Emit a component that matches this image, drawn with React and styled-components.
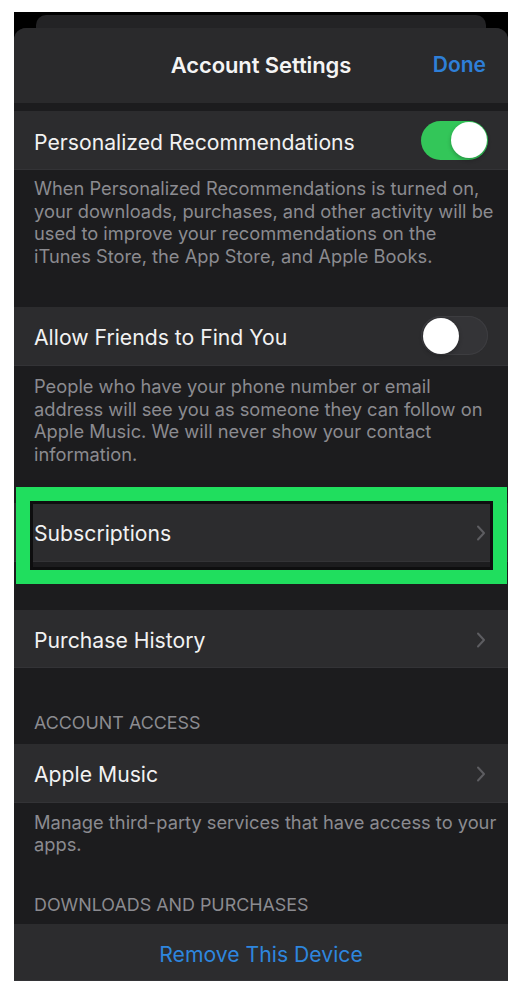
import styled, { createGlobalStyle, css } from "styled-components"

const Global = createGlobalStyle`
    html, body{
        margin: 0;
        padding: 0;
        background: #ffffff;
    }
    *{
        box-sizing: border-box;
    }
`

const Page = styled.div`
    padding: 12px 14px 0;
    font-family: Inter, "Liberation Sans", sans-serif;
`

const Screen = styled.div`
    width: 494px;
    height: 969px;
    background: #000;
    overflow: hidden;
    display: flex;
    flex-direction: column;
`

const BackCard = styled.div`
    margin: 3px 22px 0;
    height: 13px;
    flex-shrink: 0;
    border-radius: 10px 10px 0 0;
    background: #232325;
`

const Sheet = styled.div`
    flex: 1;
    border-radius: 12px 12px 0 0;
    background: #1c1c1e;
    overflow: hidden;
`

const Header = styled.header`
    height: 75px;
    display: grid;
    grid-template-columns: 1fr auto 1fr;
    align-items: center;
    padding: 0 22px 2px;
    background: #2a2a2c;
    h1{
        grid-column: 2;
        margin: 0;
        font-size: 22px;
        font-weight: 600;
        color: #f4f4f4;
        letter-spacing: -0.1px;
    }
    button{
        justify-self: end;
        border: 0;
        padding: 0;
        background: none;
        font: inherit;
        font-size: 21px;
        font-weight: 600;
        color: #2e7fd8;
    }
`

const Gap = styled.div`
    height: ${p => p.$h}px;
`

const Row = styled.div`
    position: relative;
    height: ${p => p.$h || 59}px;
    display: flex;
    align-items: center;
    justify-content: ${p => p.$center ? "center" : "space-between"};
    padding: 3px 20px 0 20px;
    background: #2c2c2e;
    border-bottom: 1px solid #333336;
    font-size: 21.2px;
    color: ${p => p.$link ? "#2e86de" : "#f2f2f2"};
`

const Footer = styled.p`
    margin: 0;
    padding: ${p => p.$top}px 10px ${p => p.$bottom}px 20px;
    font-size: 18.3px;
    line-height: 22.7px;
    color: #8b8b90;
`

const SectionTitle = styled.h2`
    margin: 0;
    padding: ${p => p.$top}px 20px ${p => p.$bottom}px;
    font-size: 17.9px;
    line-height: 20px;
    font-weight: 400;
    color: #8b8b90;
    text-transform: uppercase;
`

const Toggle = styled.span`
    position: relative;
    width: 67px;
    height: 39px;
    margin-top: -3px;
    border-radius: 20px;
    flex-shrink: 0;
    ${p => p.$on ? css`
        background: #33c659;
    ` : css`
        background: #343437;
        box-shadow: inset 0 0 0 1px #3d3d40;
    `}
    &::after{
        content: "";
        position: absolute;
        top: 1.5px;
        left: ${p => p.$on ? "29.5px" : "1.5px"};
        width: 36px;
        height: 36px;
        border-radius: 50%;
        background: #fff;
        box-shadow: 0 2px 4px rgba(0,0,0,0.25);
    }
`

const Highlight = styled.span`
    position: absolute;
    top: -16px;
    bottom: -23px;
    left: 2px;
    right: 1px;
    border: 14px solid #20de5e;
    box-shadow: inset 0 0 0 3px #0e0e0f;
    pointer-events: none;
`

const Chevron = () => (
    <svg width="10" height="16" viewBox="0 0 10 16" style={{marginRight: 2}}>
        <polyline points="2,1.5 8,8 2,14.5" fill="none" stroke="#5d5d61" strokeWidth="2" strokeLinecap="round" strokeLinejoin="round"/>
    </svg>
)

const App = () => {
    return <Page>
        <Global/>
        <Screen>
            <BackCard/>
            <Sheet>
                <Header>
                    <h1>Account Settings</h1>
                    <button>Done</button>
                </Header>
                <Gap $h={8}/>
                <Row>
                    <span>Personalized Recommendations</span>
                    <Toggle $on/>
                </Row>
                <Footer $top={7} $bottom={39}>
                    When Personalized Recommendations is turned on, your downloads, purchases, and other activity will be used to improve your recommendations on the iTunes Store, the App Store, and Apple Books.
                </Footer>
                <Row>
                    <span>Allow Friends to Find You</span>
                    <Toggle/>
                </Row>
                <Footer $top={9} $bottom={37}>
                    People who have your phone number or email address will see you as someone they can follow on Apple Music. We will never show your contact information.
                </Footer>
                <Row>
                    <span>Subscriptions</span>
                    <Chevron/>
                    <Highlight/>
                </Row>
                <Gap $h={48}/>
                <Row $h={58}>
                    <span>Purchase History</span>
                    <Chevron/>
                </Row>
                <SectionTitle $top={45} $bottom={11}>Account Access</SectionTitle>
                <Row>
                    <span>Apple Music</span>
                    <Chevron/>
                </Row>
                <Footer $top={8} $bottom={0}>
                    Manage third-party services that have access to your apps.
                </Footer>
                <SectionTitle $top={39} $bottom={9}>Downloads and Purchases</SectionTitle>
                <Row $h={57} $center $link>
                    <span>Remove This Device</span>
                </Row>
            </Sheet>
        </Screen>
    </Page>
}

export default App
